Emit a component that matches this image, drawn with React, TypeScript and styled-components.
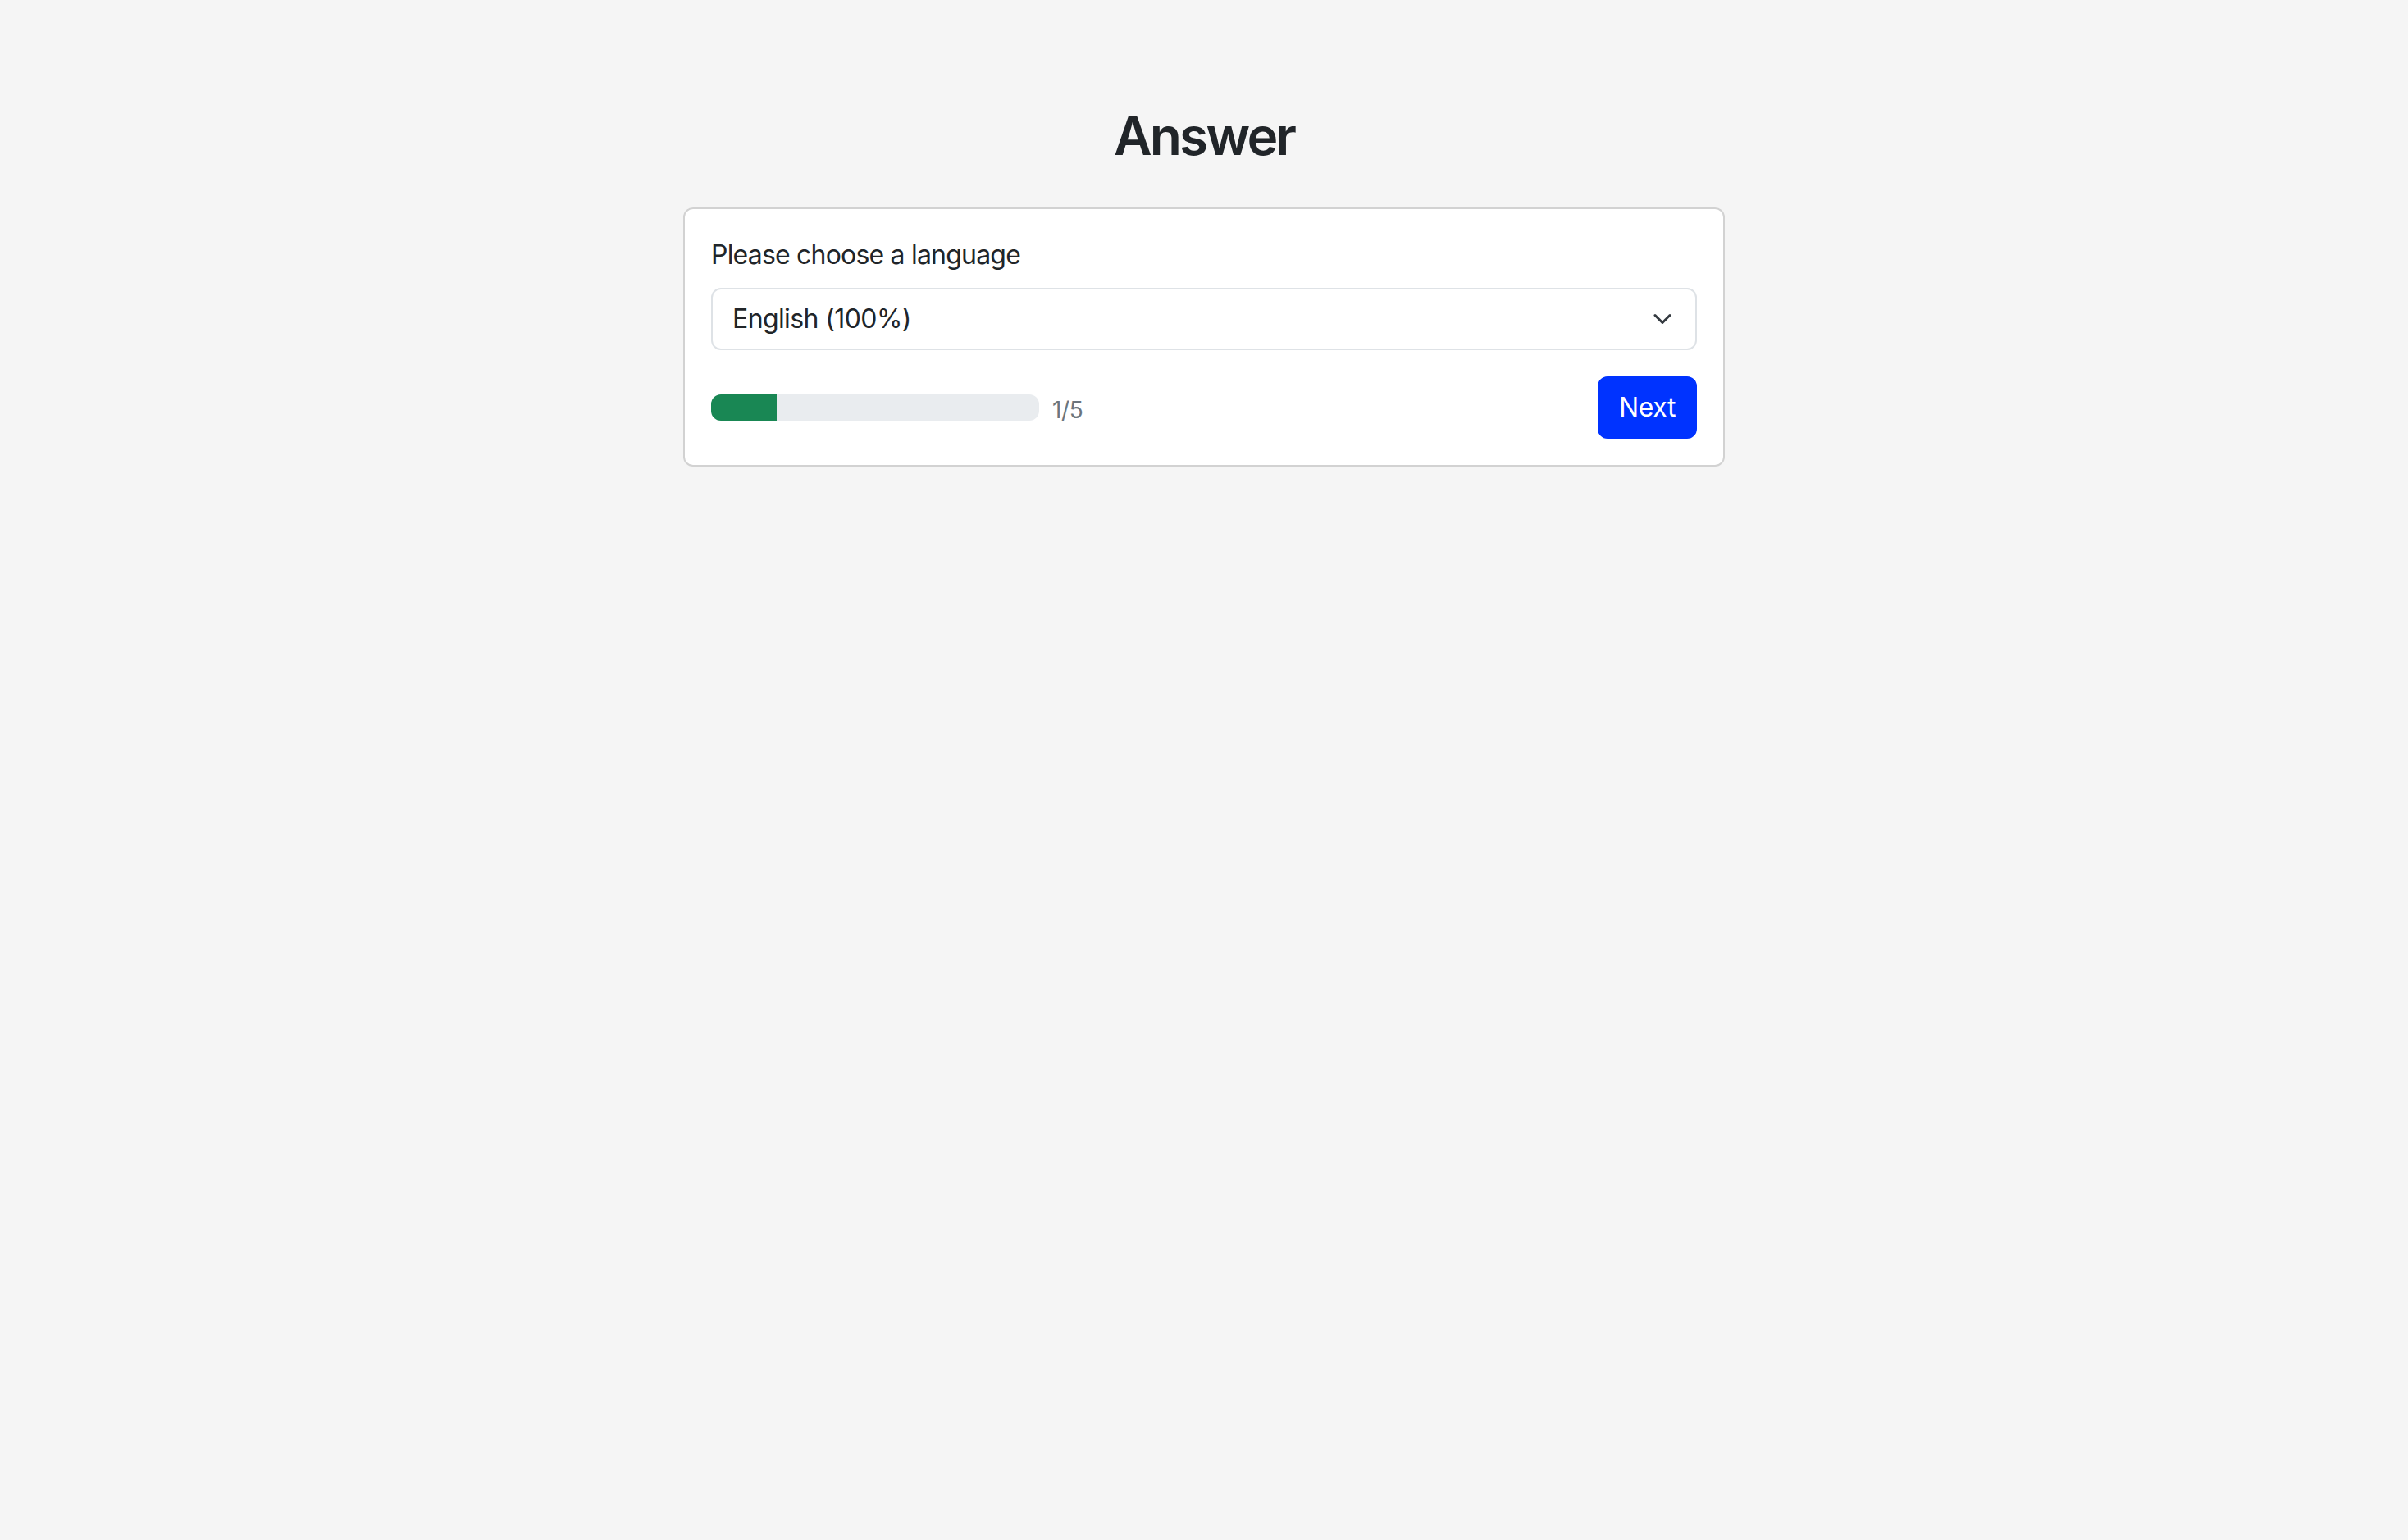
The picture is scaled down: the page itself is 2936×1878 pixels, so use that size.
import React from "react";
import styled, { createGlobalStyle } from "styled-components";

const GlobalStyle = createGlobalStyle`
  html, body {
    margin: 0;
    padding: 0;
    background: #f5f5f5;
  }
  body {
    font-family: Inter, "Noto Sans", "Liberation Sans", sans-serif;
    color: #212529;
    min-height: 100vh;
  }
  * {
    box-sizing: border-box;
  }
`;

const Page = styled.div`
  display: flex;
  flex-direction: column;
  align-items: center;
  padding-top: 128px;
`;

const Title = styled.h2`
  margin: 0 0 48px;
  font-size: 64px;
  font-weight: 600;
  letter-spacing: -2.8px;
  line-height: 1.2;
  color: #212529;
`;

const Card = styled.div`
  width: 1270px;
  background: #fff;
  border: 2px solid rgba(0, 0, 0, 0.175);
  border-radius: 12px;
  padding: 32px;
`;

const Label = styled.label`
  display: block;
  font-size: 32px;
  letter-spacing: -0.8px;
  line-height: 1.5;
  margin-bottom: 16px;
`;

const SelectWrap = styled.div`
  position: relative;
`;

const Select = styled.select`
  display: block;
  width: 100%;
  appearance: none;
  -webkit-appearance: none;
  font-family: inherit;
  font-size: 32px;
  letter-spacing: -0.6px;
  line-height: 1.5;
  color: #212529;
  background: #fff;
  padding: 12px 72px 12px 24px;
  border: 2px solid #dee2e6;
  border-radius: 12px;
  outline: none;
`;

const Chevron = styled.svg`
  position: absolute;
  right: 26px;
  top: 50%;
  width: 32px;
  height: 24px;
  margin-top: -12px;
  pointer-events: none;
`;

const Footer = styled.div`
  margin-top: 32px;
  display: flex;
  align-items: center;
  justify-content: space-between;
`;

const ProgressGroup = styled.div`
  display: flex;
  align-items: center;
`;

const Track = styled.div`
  width: 400px;
  height: 32px;
  background: #e9ecef;
  border-radius: 12px;
  overflow: hidden;
  display: flex;
`;

const Fill = styled.div`
  height: 100%;
  background: #198754;
`;

const Count = styled.span`
  margin-left: 16px;
  padding-top: 6px;
  font-size: 28px;
  letter-spacing: -0.4px;
  color: #6c757d;
`;

const NextButton = styled.button`
  font-family: inherit;
  font-size: 32px;
  letter-spacing: -0.4px;
  line-height: 1.5;
  color: #fff;
  background: #0033ff;
  border: 2px solid #0033ff;
  border-radius: 12px;
  padding: 12px 24px;
  cursor: pointer;
`;

const step = 1;
const total = 5;

const App: React.FC = () => {
  return (
    <Page>
      <GlobalStyle />
      <Title>Answer</Title>
      <Card>
        <Label htmlFor="language">Please choose a language</Label>
        <SelectWrap>
          <Select id="language" defaultValue="en">
            <option value="en">English (100%)</option>
          </Select>
          <Chevron viewBox="0 0 16 16">
            <path
              d="m2 5 6 6 6-6"
              fill="none"
              stroke="#343a40"
              strokeWidth="2"
              strokeLinecap="round"
              strokeLinejoin="round"
            />
          </Chevron>
        </SelectWrap>
        <Footer>
          <ProgressGroup>
            <Track>
              <Fill style={{ width: `${(step / total) * 100}%` }} />
            </Track>
            <Count>
              {step}/{total}
            </Count>
          </ProgressGroup>
          <NextButton>Next</NextButton>
        </Footer>
      </Card>
    </Page>
  );
};

export default App;
